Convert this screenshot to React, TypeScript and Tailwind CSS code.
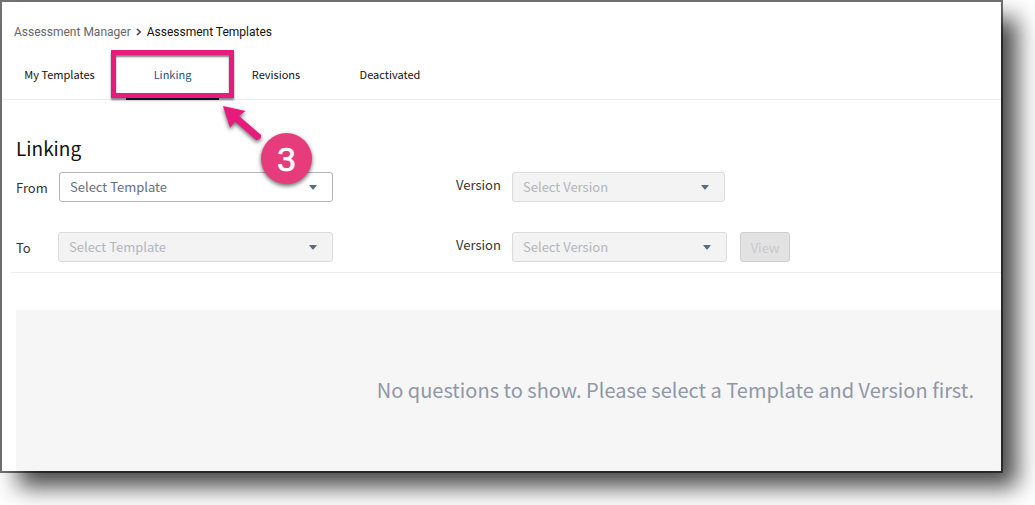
import type { ReactNode } from "react";

type PickerProps = {
  id: string;
  placeholder: string;
  disabled?: boolean;
  caret?: string;
};

function Picker({ id, placeholder, disabled = false, caret = "right-4" }: PickerProps) {
  return (
    <div className="relative min-w-0 flex-1">
      <select
        id={id}
        disabled={disabled}
        className="block h-[30px] w-full appearance-none rounded-[3px] border border-[#b3b5b8] bg-white pr-8 pl-2.5 text-[13px] leading-5 text-[#66707e] opacity-100 disabled:border-[#dcdcdc] disabled:bg-[#f3f3f3] disabled:text-[#b2b6bc]"
      >
        <option>{placeholder}</option>
      </select>
      <svg
        viewBox="0 0 8 5"
        className={`pointer-events-none absolute top-[13px] h-[5px] w-2 ${caret}`}
        aria-hidden="true"
      >
        <path d="M0.8 0h6.4q.9 0 .3.8L4.6 4.2q-.6.6-1.2 0L.5.8Q-.1 0 .8 0Z" fill="#5d6b7b" />
      </svg>
    </div>
  );
}

function Tab({ className, children }: { className: string; children: ReactNode }) {
  return (
    <button type="button" className={`h-full pb-0.5 text-center text-[11px] leading-4 ${className}`}>
      {children}
    </button>
  );
}

export default function App() {
  return (
    <div className="overflow-hidden bg-white pr-8 pb-8 font-['Noto_Sans_CJK_SC','Noto_Sans',sans-serif] text-[#111]">
      <div className="bg-[#747373] p-0.5">
        <main className="relative bg-white shadow-[16px_16px_22px_rgba(0,0,0,0.72)]">
          <nav
            aria-label="Breadcrumb"
            className="flex items-center pt-5 pl-3 font-['Roboto',sans-serif] text-[12px] leading-5"
          >
            <a href="#manager" className="text-[#666]">Assessment Manager</a>
            <svg viewBox="0 0 6 8" className="mx-[5px] h-2 w-1.5" fill="none" stroke="#444" strokeWidth="1.6" aria-hidden="true">
              <path d="M1 1l3.2 3L1 7" />
            </svg>
            <span aria-current="page">Assessment Templates</span>
          </nav>

          <div className="mt-2 flex h-[50px] border-b border-[#ececec] pl-1.5">
            <Tab className="w-[103px]">My Templates</Tab>
            <div className="relative w-[123px]">
              <Tab className="w-full text-[#1d5183]">Linking</Tab>
              <span className="absolute inset-x-[15px] -bottom-px h-1 bg-[#0b1c36]" />
              <span className="pointer-events-none absolute inset-x-0 top-0 h-12 border-[5px] border-[#e61b7b] shadow-[0_2px_2px_rgba(0,0,0,0.5),inset_0_2px_2px_rgba(0,0,0,0.5)]" />
            </div>
            <Tab className="w-[84px]">Revisions</Tab>
            <Tab className="w-36">Deactivated</Tab>
          </div>

          <section>
            <h1 className="pt-[34px] pl-3.5 text-[19px] leading-7">Linking</h1>
            <form className="ml-[9px] border-b border-[#ececec] pt-2.5 pb-2.5 pl-[5px] text-[13px] text-[#333]">
              <div className="flex h-[30px]">
                <div className="flex w-[317px] items-center">
                  <label htmlFor="from-template" className="w-[43px] pt-0.5">From</label>
                  <Picker id="from-template" placeholder="Select Template" />
                </div>
                <div className="ml-[123px] flex w-[269px] items-center">
                  <label htmlFor="from-version" className="w-14 pb-1">Version</label>
                  <Picker id="from-version" placeholder="Select Version" disabled />
                </div>
              </div>
              <div className="mt-[30px] flex h-[30px]">
                <div className="flex w-[317px] items-center">
                  <label htmlFor="to-template" className="w-[42px] pt-0.5">To</label>
                  <Picker id="to-template" placeholder="Select Template" disabled />
                </div>
                <div className="ml-[123px] flex w-[271px] items-center">
                  <label htmlFor="to-version" className="w-14 pb-1">Version</label>
                  <Picker id="to-version" placeholder="Select Version" disabled />
                </div>
                <button
                  type="button"
                  disabled
                  className="ml-[13px] w-[50px] rounded-[3px] border border-[#cfcfcf] bg-[#e2e2e2] pt-0.5 text-[13px] leading-5 text-[#c9c9cb]"
                >
                  View
                </button>
              </div>
            </form>
            <div className="mt-[37px] ml-3.5 bg-[#f6f6f6] pt-16 pr-[27px] pb-[65px] text-right text-[20px] leading-8 text-[#8f97a8]">
              No questions to show. Please select a Template and Version first.
            </div>
          </section>

          <svg
            viewBox="0 0 100 100"
            className="pointer-events-none absolute top-[98px] left-[216px] size-[100px] overflow-visible"
            role="img"
            aria-label="Step 3"
          >
            <g className="drop-shadow-[0_2px_2px_rgba(0,0,0,0.6)]">
              <path d="M5 6 L27.5 11 L21 16 L43 35 Q44 40 38 40 L17 21.5 L12 28 Z" fill="#e61b7b" />
              <circle cx="68.5" cy="58.5" r="25.5" fill="#e73c7c" />
            </g>
            <text
              x="68.5"
              y="70.5"
              textAnchor="middle"
              fill="white"
              stroke="white"
              strokeWidth="0.7"
              className="font-['Liberation_Sans',sans-serif] text-[33px]"
            >
              3
            </text>
          </svg>
        </main>
      </div>
    </div>
  );
}
